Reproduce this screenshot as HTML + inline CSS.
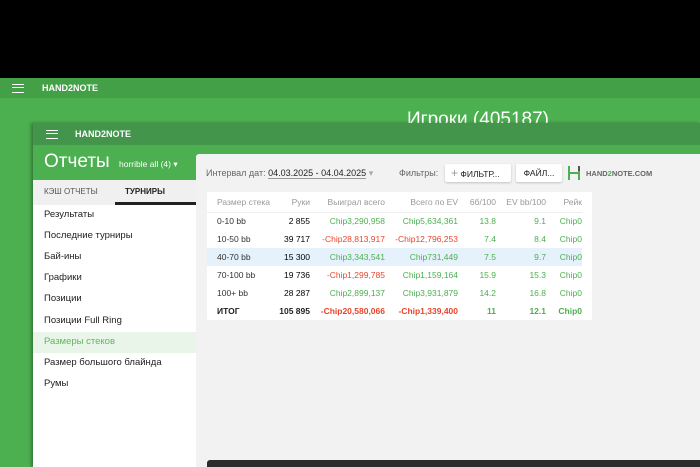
<!DOCTYPE html><html><head><meta charset="utf-8"><style>
*{margin:0;padding:0;box-sizing:border-box}
body{width:700px;height:467px;overflow:hidden;background:#000;font-family:"Liberation Sans",sans-serif;position:relative}
.a{position:absolute}
.ham{position:absolute;width:12px;height:9px;border-top:1.5px solid #fff;border-bottom:1.5px solid #fff}
.ham:after{content:"";position:absolute;left:0;right:0;top:2px;border-top:1.5px solid #fff}
.t{font-size:9.5px;color:#222}
table{border-collapse:collapse;font-size:8.5px;table-layout:fixed}
td{height:18px;padding:0;text-align:right;white-space:nowrap}
td:first-child{text-align:left;padding-left:10px;color:#333}
.g{color:#4caf50}.r{color:#e8452c}
</style></head><body>
<div class="a" style="left:0;top:78px;width:700px;height:389px;background:#4caf50"></div>
<div class="a" style="left:0;top:78px;width:700px;height:20px;background:#43a047"></div>
<div class="ham" style="left:12px;top:84px"></div>
<div class="a" style="left:42px;top:83px;color:#fff;font-size:9px;font-weight:bold">HAND2NOTE</div>
<div class="a" style="left:407px;top:108px;color:#fff;font-size:19px;height:15px;overflow:hidden;line-height:24px">Игроки (405187)</div>
<div class="a" style="left:33px;top:123px;width:667px;height:344px;background:#4caf50;box-shadow:-2px 0 3px rgba(0,0,0,.3)"></div>
<div class="a" style="left:33px;top:123px;width:667px;height:22px;background:#43954b"></div>
<div class="ham" style="left:46px;top:130px"></div>
<div class="a" style="left:75px;top:129px;color:#fff;font-size:9px;font-weight:bold">HAND2NOTE</div>
<div class="a" style="left:44px;top:151px;color:#fff;font-size:19px">Отчеты</div>
<div class="a" style="left:119px;top:159px;color:#fff;font-size:8.5px">horrible all (4) ▾</div>
<div class="a" style="left:33px;top:180px;width:164px;height:287px;background:#fff"></div>
<div class="a" style="left:33px;top:180px;width:164px;height:25px;background:#f0f0f0"></div>
<div class="a" style="left:44px;top:187px;font-size:8px;color:#555">КЭШ ОТЧЕТЫ</div>
<div class="a" style="left:125px;top:187px;font-size:8px;color:#222;font-weight:bold">ТУРНИРЫ</div>
<div class="a" style="left:115px;top:202px;width:82px;height:3px;background:#222"></div>
<div class="a" style="left:33px;top:332px;width:164px;height:21px;background:#eaf5ea"></div>
<div class="a t" style="left:44px;top:209px">Результаты</div>
<div class="a t" style="left:44px;top:230px">Последние турниры</div>
<div class="a t" style="left:44px;top:251px">Бай-ины</div>
<div class="a t" style="left:44px;top:272px">Графики</div>
<div class="a t" style="left:44px;top:293px">Позиции</div>
<div class="a t" style="left:44px;top:315px">Позиции Full Ring</div>
<div class="a t" style="left:44px;top:336px;color:#5cb85c">Размеры стеков</div>
<div class="a t" style="left:44px;top:357px">Размер большого блайнда</div>
<div class="a t" style="left:44px;top:378px">Румы</div>
<div class="a" style="left:196px;top:154px;width:504px;height:313px;background:#f2f2f2;border-top-left-radius:3px"></div>
<div class="a" style="left:206px;top:168px;font-size:9px;color:#666">Интервал дат: <span style="color:#222;border-bottom:1px solid #999">04.03.2025 - 04.04.2025</span> <span style="color:#aaa">▾</span></div>
<div class="a" style="left:399px;top:168px;font-size:9px;color:#666">Фильтры:</div>
<div class="a" style="left:445px;top:164px;width:66px;height:18px;background:#fff;box-shadow:0 1px 2px rgba(0,0,0,.2);border-radius:2px;font-size:8.5px;color:#222;line-height:18px;padding-left:6px"><span style="color:#999;font-size:12px">+</span> ФИЛЬТР...</div>
<div class="a" style="left:516px;top:164px;width:46px;height:18px;background:#fff;box-shadow:0 1px 2px rgba(0,0,0,.2);border-radius:2px;font-size:8.5px;color:#222;line-height:18px;text-align:center">ФАЙЛ...</div>
<svg class="a" style="left:567px;top:165px" width="14" height="16"><path d="M2 1v14M12 1v14M2 8h10" stroke="#4caf50" stroke-width="2" fill="none"/><path d="M12 1v5" stroke="#555" stroke-width="2"/></svg>
<div class="a" style="left:586px;top:169px;font-size:7.5px;color:#666;font-weight:bold">HAND<span style="color:#4caf50">2</span>NOTE.COM</div>
<div class="a" style="left:207px;top:192px;width:385px;height:128px;background:#fff;border-radius:2px">
<table style="width:375px">
<colgroup><col style="width:60px"><col style="width:43px"><col style="width:75px"><col style="width:73px"><col style="width:38px"><col style="width:50px"><col style="width:36px"></colgroup>
<tr style="color:#999;border-bottom:1px solid #eee"><td style="color:#999;height:20px">Размер стека</td><td>Руки</td><td>Выиграл всего</td><td>Всего по EV</td><td>6б/100</td><td>EV bb/100</td><td>Рейк</td></tr>
<tr><td>0-10 bb</td><td>2 855</td><td class="g">Chip3,290,958</td><td class="g">Chip5,634,361</td><td class="g">13.8</td><td class="g">9.1</td><td class="g">Chip0</td></tr>
<tr><td>10-50 bb</td><td>39 717</td><td class="r">-Chip28,813,917</td><td class="r">-Chip12,796,253</td><td class="g">7.4</td><td class="g">8.4</td><td class="g">Chip0</td></tr>
<tr style="background:#e6f2fb"><td>40-70 bb</td><td>15 300</td><td class="g">Chip3,343,541</td><td class="g">Chip731,449</td><td class="g">7.5</td><td class="g">9.7</td><td class="g">Chip0</td></tr>
<tr><td>70-100 bb</td><td>19 736</td><td class="r">-Chip1,299,785</td><td class="g">Chip1,159,164</td><td class="g">15.9</td><td class="g">15.3</td><td class="g">Chip0</td></tr>
<tr><td>100+ bb</td><td>28 287</td><td class="g">Chip2,899,137</td><td class="g">Chip3,931,879</td><td class="g">14.2</td><td class="g">16.8</td><td class="g">Chip0</td></tr>
<tr style="font-weight:bold"><td style="color:#222">ИТОГ</td><td style="color:#222">105 895</td><td class="r">-Chip20,580,066</td><td class="r">-Chip1,339,400</td><td class="g">11</td><td class="g">12.1</td><td class="g">Chip0</td></tr>
</table></div>
<div class="a" style="left:207px;top:460px;width:493px;height:7px;background:#2b2b2b;border-radius:3px 0 0 0"></div>
</body></html>
